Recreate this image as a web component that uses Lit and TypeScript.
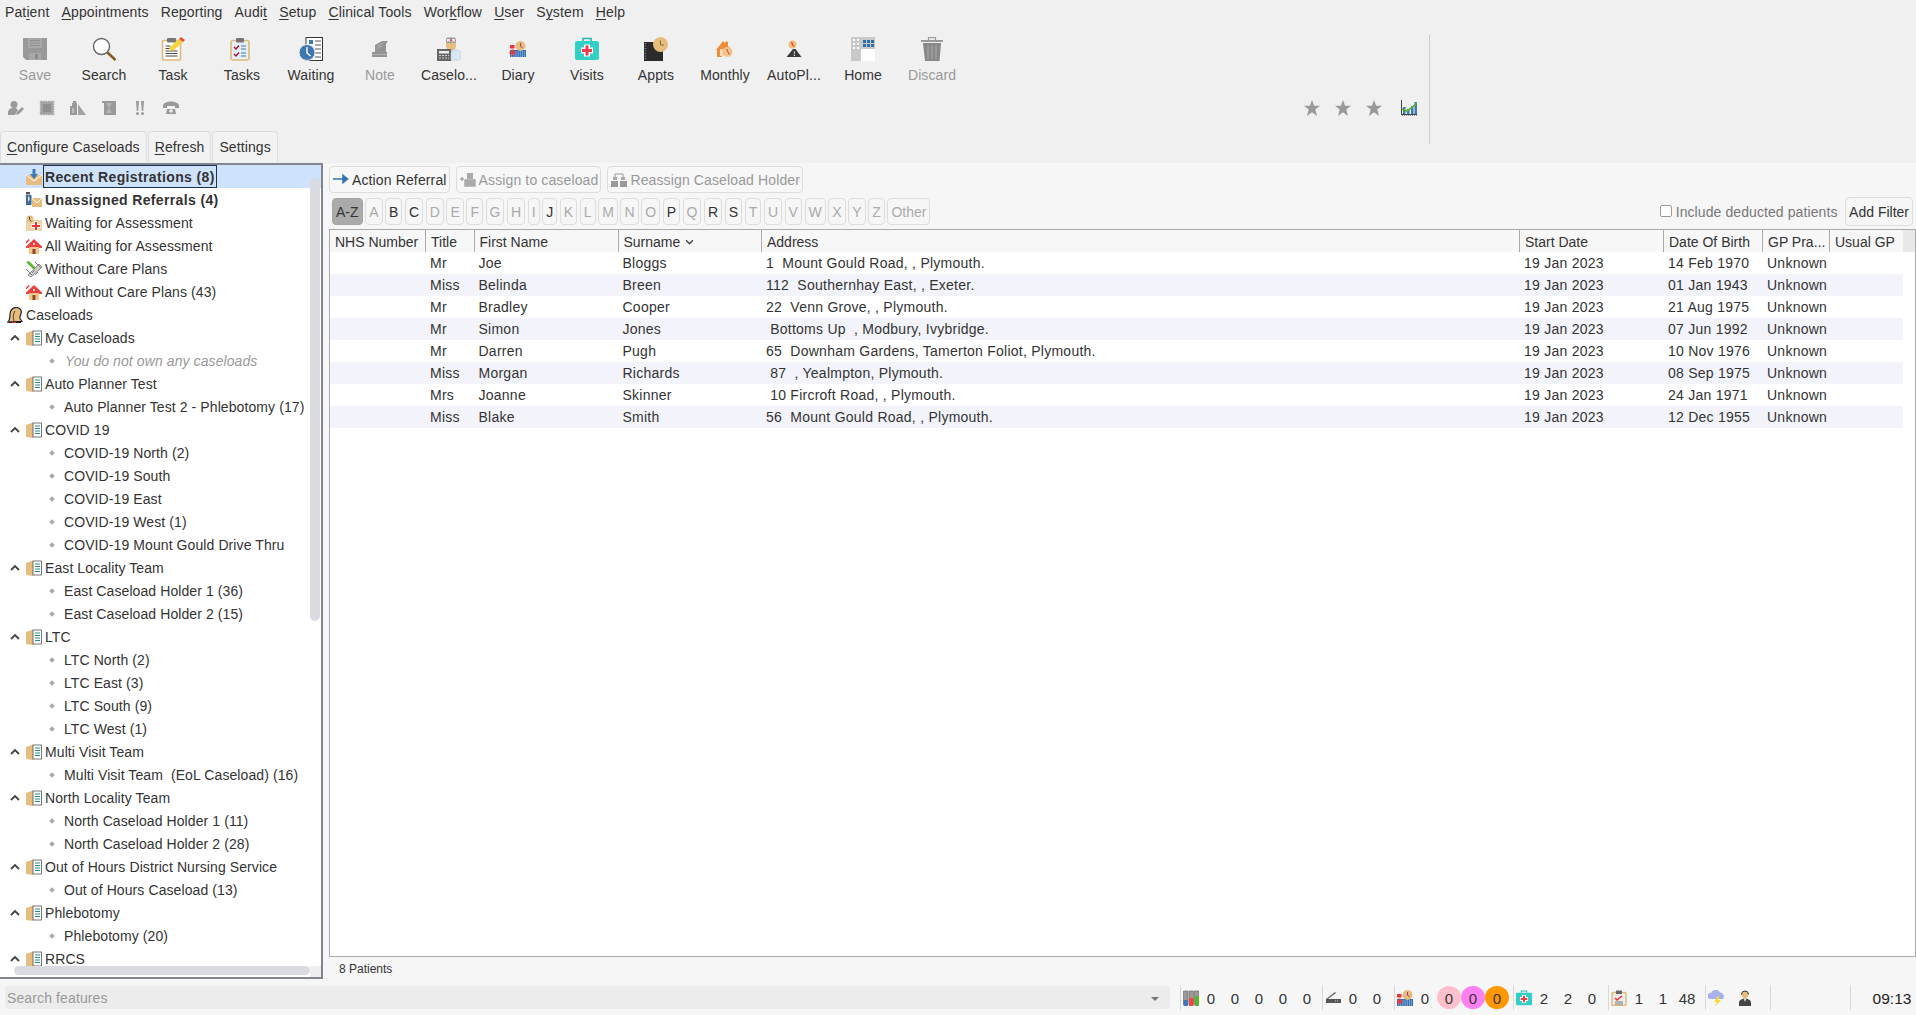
import { LitElement, html, css, svg, nothing } from "lit";
import { customElement } from "lit/decorators.js";

const icons: Record<string, any> = {
  save: svg`<path d="M0 1h24v22H3l-3-3z" fill="#999"/><rect x="5" y="1" width="14" height="10" fill="#a8a8a8"/><path d="M7 3.500h10M7 6h10M7 8.500h10" stroke="#8f8f8f" stroke-width="1"/><rect x="6" y="16" width="12" height="7" fill="#a8a8a8"/><rect x="12" y="17" width="3" height="5" fill="#8a8a8a"/>`,
  search: svg`<circle cx="9.500" cy="9.500" r="8" fill="#fff" stroke="#666" stroke-width="1.400"/><path d="M15.500 15.500l8 7.500" stroke="#8a5a1e" stroke-width="2.600"/>`,
  task: svg`<rect x="1.500" y="3.500" width="18" height="19.500" rx="1" fill="#fff" stroke="#e2b876" stroke-width="1.600"/><rect x="6" y="1" width="9" height="4.500" rx="1" fill="#777"/><path d="M4.500 9h5M4.500 11.500h4M4.500 14h12M4.500 16.500h12M4.500 19h12" stroke="#444" stroke-width="1.200"/><path d="M8 14l1-4L18 2l4 3-9 8z" fill="#f7d23a"/><path d="M18 2l2-2 4 3-2 2z" fill="#e84c3d"/>`,
  tasks: svg`<rect x="1" y="3.500" width="18" height="19.500" rx="2" fill="#e5eff9" stroke="#e2b876" stroke-width="1.600"/><rect x="6" y="1" width="8" height="4.500" rx="1" fill="#777"/><path d="M4 10l2 2 3-3.500M4 17l2 2 3-3.500" fill="none" stroke="#a3153d" stroke-width="1.500"/><path d="M11 9h5M11 12h5M11 16h5M11 19h5" stroke="#3d7ab5" stroke-width="1.200"/>`,
  waiting: svg`<rect x="7" y="0.500" width="16.500" height="23" fill="#fff" stroke="#333"/><rect x="10" y="3" width="4" height="4" fill="#3d7ab5"/><path d="M16 4h6M16 8h6M16 12h6M16 16h6M16 20h6" stroke="#555"/><circle cx="8" cy="15.500" r="8" fill="#3f77b2" stroke="#eee"/><path d="M8 10v6l3.500 3" fill="none" stroke="#fff" stroke-width="1.400"/>`,
  note: svg`<path d="M7 15V8l7-4h6l-2 3v8z" fill="#949494"/><path d="M9 9l6-3M9 11.500l6-3" stroke="#b5b5b5" stroke-width=".8"/><rect x="4" y="15" width="15" height="5" fill="#949494"/><path d="M4 17.500h15" stroke="#bbb" stroke-width=".7"/>`,
  caseload: svg`<path d="M9 5h10v4a5 5 0 0 1-10 0z" fill="#e6bd7f"/><rect x="9" y="0.500" width="10" height="5.500" rx="2" fill="#999"/><rect x="10" y="2" width="8" height="2.500" fill="#eee"/><circle cx="14" cy="3.200" r="1.100" fill="#e33"/><rect x="0" y="12" width="14" height="12" fill="#666"/><rect x="2" y="14" width="10" height="2.500" fill="#eee"/><path d="M2 18.500h10M2 21h10" stroke="#ccc" stroke-dasharray="2 1"/><path d="M14 23v-6a4 4 0 0 1 3-4l3 0a5 5 0 0 1 4 5v3l-2 2z" fill="#d6e8f6" stroke="#b9c8d4" stroke-width=".6"/>`,
  diary: svg`<rect x="4" y="13" width="16" height="7" fill="#2e6fb5"/><path d="M5 15h14M5 17h14M5 19h14" stroke="#fff" stroke-dasharray="1 1.200" stroke-width=".8"/><circle cx="14.500" cy="9" r="5" fill="#e6bd7f"/><path d="M14.500 6v3l2 2" stroke="#a36" fill="none"/><rect x="4" y="8" width="4.500" height="3.500" fill="#e33"/><path d="M6.500 12.500v6M3.500 15.500h6" stroke="#e33" stroke-width="2"/>`,
  visits: svg`<path d="M8 4V1.500h8V4" fill="none" stroke="#27b8ad" stroke-width="1.600"/><rect x="0" y="4" width="24" height="19" rx="2" fill="#32cfc5"/><path d="M12 7.500v12M6 13.500h12" stroke="#fff" stroke-width="6"/><path d="M12 8.500v10M7 13.500h10" stroke="#ec3b4c" stroke-width="3"/>`,
  appts: svg`<rect x="0" y="5" width="19" height="19" fill="#2b2b2b"/><path d="M1.500 6v17" stroke="#888" stroke-dasharray="1 1.500" stroke-width="1.400"/><circle cx="16.500" cy="7.500" r="7.500" fill="#e6bd7f"/><path d="M16.500 3.500v4.500h3.500" fill="none" stroke="#8a6a30" stroke-width="1"/>`,
  monthly: svg`<path d="M4 20v-7H3l7-9 2 2 1-2 2 1v4l3 3v2H9v6z" fill="#ee8c3a"/><path d="M7 12h5v7H7z" fill="#f6d9bb"/><circle cx="14.500" cy="15" r="5" fill="#f0c58a"/><path d="M13.500 12l1.500 3 1.500 2.500" fill="none" stroke="#d33" stroke-width="1"/>`,
  autopl: svg`<circle cx="10.500" cy="7.500" r="4" fill="#efc078"/><path d="M9.500 5l1 2.500 1.500 2" fill="none" stroke="#d33" stroke-width="1.200"/><path d="M11 12h2.500l6 8h-15z" fill="#3a3a3a"/><path d="M12.300 14.500v2M12.300 17.500v1.500" stroke="#fff"/>`,
  home: svg`<rect width="24" height="24" fill="#c9c9c9"/><rect x="10" y="12" width="14" height="12" fill="#fff"/><g fill="#fff"><rect x="2" y="2" width="2" height="2"/><rect x="6" y="2" width="2" height="2"/><rect x="2" y="6" width="2" height="2"/><rect x="6" y="6" width="2" height="2"/><rect x="2" y="10" width="2" height="2"/><rect x="6" y="10" width="2" height="2"/></g><g fill="#2f6da8"><rect x="12" y="3" width="3" height="3"/><rect x="16" y="3" width="3" height="3"/><rect x="20" y="3" width="3" height="3"/><rect x="12" y="7" width="3" height="3"/><rect x="16" y="7" width="3" height="3"/><rect x="20" y="7" width="3" height="3"/></g>`,
  discard: svg`<rect x="8.500" y="0.500" width="7" height="3" fill="none" stroke="#999" stroke-width="1.200"/><rect x="1" y="3" width="22" height="2" fill="#999"/><path d="M3 6h18l-1.500 18H5z" fill="#888"/><path d="M8 8v14M12 8v14M16 8v14" stroke="#a8a8a8" stroke-width="1.200"/>`,

  sPerson: svg`<circle cx="6" cy="4.500" r="3.500" fill="#999"/><path d="M0 15v-3a5 5 0 0 1 5-4h3l2 2-3 5z" fill="#999"/><path d="M8 15l1-3 5-5 2 2-5 5z" fill="#999"/>`,
  sStamp: svg`<rect x="1.500" y="1.500" width="13" height="13" fill="#a3a3a3" stroke="#a3a3a3" stroke-width="1.500" stroke-dasharray="1.500 1"/><rect x="4" y="4" width="8" height="8" fill="#8f8f8f"/>`,
  sBuild: svg`<path d="M0 15V6h2V3h1V1h3l1 3v11z" fill="#999"/><path d="M8 15V4l8 11z" fill="#a3a3a3"/><path d="M3 8v5" stroke="#ddd"/>`,
  sScroll: svg`<path d="M1 1h14v14H3V3H1z" fill="#999"/><path d="M5 3h6l-3 5 3 5H5l3-5z" fill="#b5b5b5"/>`,
  sBang: svg`<path d="M4 1h3l-.8 10H4.800zM9 1h3l-.8 10H9.800z" fill="#999"/><circle cx="5.500" cy="13.500" r="1.500" fill="#999"/><circle cx="10.500" cy="13.500" r="1.500" fill="#999"/>`,
  sPhone: svg`<path d="M0 6c0-6 16-6 16 0v2h-4V6H4v2H0z" fill="#999"/><path d="M3 14l1-5h8l1 5z" fill="#999"/><circle cx="8" cy="11" r="1.800" fill="#eee"/>`,
  star: svg`<path d="M8 0l2.100 5.800H16l-4.700 3.600L13 16 8 12.200 3 16l1.700-6.600L0 5.800h5.900z" fill="#999"/>`,
  chart: svg`<path d="M.5 0v15M0 14.500h16" stroke="#444"/><path d="M1 15h15" stroke="#444" stroke-dasharray="1 1"/><rect x="2" y="7" width="2.500" height="7" fill="#3d7ab5"/><rect x="6" y="9" width="2.500" height="5" fill="#3d7ab5"/><rect x="10" y="6" width="2.500" height="8" fill="#3d7ab5"/><rect x="13.500" y="2" width="2.500" height="12" fill="#3d7ab5"/><path d="M1 9l5 2 4-3 6-5" fill="none" stroke="#5cb531" stroke-width="1.600"/>`,

  envDown: svg`<path d="M0 6h16v10H0z" fill="#e6bd7f"/><path d="M0 6l8 6 8-6" fill="none" stroke="#fff" stroke-width="1"/><path d="M6.500 0h3v5H12L8 10 4 5h2.500z" fill="#3d7ab5"/>`,
  envMan: svg`<rect x="0" y="0" width="4" height="2.500" fill="#555"/><rect x="0" y="3" width="5.500" height="10" fill="#3d6c99"/><path d="M2.800 3l-.8 4 .8 3 .8-3z" fill="#fff"/><path d="M6 6h10v9H6z" fill="#e6bd7f"/><path d="M6 6l5 5 5-5" fill="none" stroke="#fff"/>`,
  envCross: svg`<path d="M0 5h16v11H0z" fill="#f0d3a4"/><circle cx="4" cy="4" r="3.500" fill="#e6bd7f"/><path d="M3.500 1.500v3l2 2" stroke="#555" fill="none"/><path d="M10 6.500v9M5.500 11h9" stroke="#fff" stroke-width="4"/><path d="M10 7v8M6 11h8" stroke="#e33" stroke-width="2"/>`,
  houseRed: svg`<path d="M0 8.500L8 1l8 7.500v1.500H0z" fill="#ea4040"/><path d="M0 5l3-3.500" stroke="#ea4040" stroke-width="1.500"/><rect x="3" y="9" width="10" height="7" fill="#f4c58b"/><rect x="6.500" y="11" width="3" height="5" fill="#8a4a2a"/><circle cx="8" cy="6" r="1" fill="#fff"/>`,
  tools: svg`<path d="M0 1l3-1 8 8-2 2z" fill="#5cb531"/><path d="M2 14L13 3l3 3L5 16z" fill="#ccc" stroke="#777" stroke-width=".8"/><path d="M0 8l7 7M9 1l6 6M6 12l3-3M9 14l3-3" stroke="#888"/>`,
  cases: svg`<path d="M1 15c2-2 2-5 2-8 0-4 3-6.500 6.500-6.500s5.500 3 4.500 6c-.5 2-1.500 3-1 5l2 3H9z" fill="#e6bd7f" stroke="#222" stroke-width="1.200"/><path d="M8 4c-2 3-2 6-1 10" fill="none" stroke="#222" stroke-width=".8"/><path d="M2 15.500h12" stroke="#222" stroke-width="1.400"/><path d="M5 15.500h4" stroke="#d33" stroke-width="1.400"/>`,
  book: svg`<path d="M0 3l7-2.500v15.500l-7-1z" fill="#e6bd7f"/><rect x="7" y="1" width="8.500" height="14" fill="#fff" stroke="#555" stroke-width=".8"/><path d="M9 4h5M9 6.500h5M9 9h5M9 11.500h5" stroke="#1f8f88" stroke-width="1.100"/>`,

  tubes: svg`<path d="M.5 1h4.500v13a2.200 2.200 0 0 1-4.500 0z" fill="#999" stroke="#666" stroke-width=".6"/><path d="M.5 10h4.500v4a2.200 2.200 0 0 1-4.500 0z" fill="#3d7ab5"/><path d="M6 1h4.500v13a2.200 2.200 0 0 1-4.500 0z" fill="#999" stroke="#666" stroke-width=".6"/><path d="M6 8h4.500v6a2.200 2.200 0 0 1-4.500 0z" fill="#e44"/><path d="M11.500 1h4.500v13a2.200 2.200 0 0 1-4.500 0z" fill="#999" stroke="#666" stroke-width=".6"/><path d="M11.500 6h4.500v8a2.200 2.200 0 0 1-4.500 0z" fill="#5cb531"/>`,
  scanner: svg`<path d="M1 9L10 2l1 1-8 6z" fill="#666"/><path d="M1 9h15v4H1z" fill="#555"/><path d="M10 11h4" stroke="#ccc" stroke-dasharray="1 1"/>`,
  clip: svg`<rect x="1" y="2.500" width="14" height="13" rx="1" fill="#eee" stroke="#e2b876" stroke-width="1.400"/><rect x="5" y="0.500" width="6" height="3.500" fill="#666"/><path d="M4 8l2 2 5-4" fill="none" stroke="#e33" stroke-width="1.500"/><path d="M4 12h8M4 14h8" stroke="#777"/>`,
  storm: svg`<path d="M2 9a3 3 0 0 1 1-6 5 5 0 0 1 9-.5A4 4 0 0 1 15 9z" fill="#aab0ee"/><path d="M10 6l-4 6h3l-2 5 6-7h-3l2-4z" fill="#f3d93a"/>`,
  agent: svg`<path d="M2 16v-3c0-3 3-4.500 6-4.500s6 1.500 6 4.500v3z" fill="#444"/><path d="M6.500 8.500L8 12l1.500-3.500z" fill="#ddd"/><circle cx="8" cy="4.500" r="3.500" fill="#e6bd7f"/><path d="M4.500 4.500a3.500 3.500 0 0 1 7 0" fill="none" stroke="#333"/>`,
  arrow: svg`<path d="M0 7h13M10 3.500L14.500 7 10 10.500z" stroke="#2f74b5" stroke-width="1.600" fill="#2f74b5"/>`,
  assign: svg`<rect x="7" y="1" width="6" height="6" fill="#aaa"/><path d="M5 14V8h10v6zM0 7h4M2 5v4" stroke="#aaa" stroke-width="1.500" fill="#aaa"/>`,
  reassign: svg`<rect x="2" y="5" width="4" height="3" fill="#aaa"/><rect x="10" y="5" width="4" height="3" fill="#aaa"/><path d="M0 15V9h7v6zM9 15V9h7v6z" fill="#999"/><path d="M4 5V2h8v3" fill="none" stroke="#999"/>`,
};

const ic = (name: string, cls: string, vb = "0 0 24 24") =>
  html`<svg class=${cls} viewBox=${vb} aria-hidden="true">${icons[name]}</svg>`;
const S16 = "0 0 16 16";

const menu: [string, number][] = [
  ["Patient", 3], ["Appointments", 0], ["Reporting", 2], ["Audit", 4], ["Setup", 0],
  ["Clinical Tools", 0], ["Workflow", 3], ["User", 0], ["System", 1], ["Help", 0],
];

const tools: [string, string, boolean][] = [
  ["Save", "save", true], ["Search", "search", false], ["Task", "task", false], ["Tasks", "tasks", false],
  ["Waiting", "waiting", false], ["Note", "note", true], ["Caselo...", "caseload", false], ["Diary", "diary", false],
  ["Visits", "visits", false], ["Appts", "appts", false], ["Monthly", "monthly", false], ["AutoPl...", "autopl", false],
  ["Home", "home", false], ["Discard", "discard", true],
];

type Row = { k: "top" | "root" | "group" | "leaf"; t: string; i?: string; b?: boolean; sel?: boolean; em?: boolean };
const group = (t: string): Row => ({ k: "group", t, i: "book" });
const leaf = (t: string): Row => ({ k: "leaf", t });
const tree: Row[] = [
  { k: "top", t: "Recent Registrations (8)", i: "envDown", b: true, sel: true },
  { k: "top", t: "Unassigned Referrals (4)", i: "envMan", b: true },
  { k: "top", t: "Waiting for Assessment", i: "envCross" },
  { k: "top", t: "All Waiting for Assessment", i: "houseRed" },
  { k: "top", t: "Without Care Plans", i: "tools" },
  { k: "top", t: "All Without Care Plans (43)", i: "houseRed" },
  { k: "root", t: "Caseloads", i: "cases" },
  group("My Caseloads"),
  { k: "leaf", t: "You do not own any caseloads", em: true },
  group("Auto Planner Test"), leaf("Auto Planner Test 2 - Phlebotomy (17)"),
  group("COVID 19"), leaf("COVID-19 North (2)"), leaf("COVID-19 South"), leaf("COVID-19 East"), leaf("COVID-19 West (1)"), leaf("COVID-19 Mount Gould Drive Thru"),
  group("East Locality Team"), leaf("East Caseload Holder 1 (36)"), leaf("East Caseload Holder 2 (15)"),
  group("LTC"), leaf("LTC North (2)"), leaf("LTC East (3)"), leaf("LTC South (9)"), leaf("LTC West (1)"),
  group("Multi Visit Team"), leaf("Multi Visit Team  (EoL Caseload) (16)"),
  group("North Locality Team"), leaf("North Caseload Holder 1 (11)"), leaf("North Caseload Holder 2 (28)"),
  group("Out of Hours District Nursing Service"), leaf("Out of Hours Caseload (13)"),
  group("Phlebotomy"), leaf("Phlebotomy (20)"),
  group("RRCS"),
];

const letters = ["A-Z", ..."ABCDEFGHIJKLMNOPQRSTUVWXYZ".split(""), "Other"];
const active = new Set(["A-Z", "B", "C", "J", "P", "R", "S"]);

const head = ["NHS Number", "Title", "First Name", "Surname", "Address", "Start Date", "Date Of Birth", "GP Pra...", "Usual GP"];
const patients = [
  ["Mr", "Joe", "Bloggs", "1  Mount Gould Road, , Plymouth.", "14 Feb 1970"],
  ["Miss", "Belinda", "Breen", "112  Southernhay East, , Exeter.", "01 Jan 1943"],
  ["Mr", "Bradley", "Cooper", "22  Venn Grove, , Plymouth.", "21 Aug 1975"],
  ["Mr", "Simon", "Jones", " Bottoms Up  , Modbury, Ivybridge.", "07 Jun 1992"],
  ["Mr", "Darren", "Pugh", "65  Downham Gardens, Tamerton Foliot, Plymouth.", "10 Nov 1976"],
  ["Miss", "Morgan", "Richards", " 87  , Yealmpton, Plymouth.", "08 Sep 1975"],
  ["Mrs", "Joanne", "Skinner", " 10 Fircroft Road, , Plymouth.", "24 Jan 1971"],
  ["Miss", "Blake", "Smith", "56  Mount Gould Road, , Plymouth.", "12 Dec 1955"],
];

const status: { w: number; icon?: string; vb?: string; nums?: (string | [string, string])[]; extra?: string }[] = [
  { w: 142, icon: "tubes", vb: S16, nums: ["0", "0", "0", "0", "0"] },
  { w: 72, icon: "scanner", vb: S16, nums: ["0", "0"] },
  { w: 119, icon: "diary", vb: "4 4 16 16", nums: ["0", ["0", "pink"], ["0", "magenta"], ["0", "orange"]] },
  { w: 95, icon: "visits", nums: ["2", "2", "0"] },
  { w: 97, icon: "clip", vb: S16, nums: ["1", "1", "48"] },
  { w: 65, icon: "storm", vb: S16, extra: "agent" },
  { w: 80 },
];

@customElement("app-root")
export class AppRoot extends LitElement {
  static styles = css`
    :host {
      display: flex;
      flex-direction: column;
      width: 1916px;
      height: 1015px;
      overflow: hidden;
      background: #f6f6f6;
      color: #333;
      font: 14px/1.2 "Liberation Sans", Arial, sans-serif;
    }
    svg { display: block; flex: none; }
    u { text-decoration-thickness: 1px; text-underline-offset: 2px; }

    .top { background: #f0f0f0; height: 163px; flex: none; }
    .menu { display: flex; gap: 12.1px; height: 25px; align-items: center; padding-left: 5px; letter-spacing: 0.12px; }
    .toolwrap { margin-top: 10px; width: 1429px; height: 96px; border-right: 1px solid #ccc; padding-bottom: 13px; }
    .tools { display: flex; height: 53px; padding-left: 0.5px; letter-spacing: 0.1px; }
    .tool { width: 69px; display: flex; flex-direction: column; align-items: center; padding-top: 2px; }
    .tool span { margin-top: 6px; line-height: 16px; }
    .tool.off span { color: #999; }
    .i24 { width: 24px; height: 24px; }
    .row2 { display: flex; align-items: center; height: 40px; padding-left: 8px; }
    .small { display: flex; gap: 15px; }
    .i16 { width: 16px; height: 16px; }
    .stars { display: flex; gap: 15px; margin-left: 1125px; }
    .stars .chart { margin-left: 4px; }
    .tabs { display: flex; gap: 1px; margin-top: -13px; letter-spacing: 0.1px; }
    .tab { height: 30px; line-height: 31px; padding: 0 6px; border: 1px solid #ddd; border-bottom: 0; border-radius: 4px 4px 0 0; background: #f2f2f2; }

    .body { display: flex; flex: none; height: 822px; }
    .tree {
      position: relative; width: 321px; height: 812px; flex: none; overflow: hidden;
      background: #fff; border: 2px solid #808590; border-left: 0; letter-spacing: 0.09px;
    }
    .row { display: flex; align-items: center; height: 23px; white-space: pre; }
    .row > span { padding-top: 2px; }
    .row.top-r { padding-left: 26px; }
    .row.root { padding-left: 7px; }
    .row.group { padding-left: 10px; }
    .row.leaf { padding-left: 50px; }
    .row.sel { background: #cfe2fb; width: 310px; }
    .row .i16 { margin-right: 3px; }
    .b { font-weight: 700; letter-spacing: 0.36px; }
    .row > span.focus { border: 1px solid #1c3250; line-height: 19px; padding: 2px 1px 0; margin-left: -2px; }
    .chev { width: 10px; height: 7px; margin-right: 6px; }
    .row > span.dot { width: 4px; height: 4px; padding: 0; background: #aaa; margin-right: 10px; transform: rotate(45deg); }
    .em { font-style: italic; color: #999; margin-left: 1px; }
    .vbar { position: absolute; right: 1px; top: 13px; width: 10px; height: 443px; background: #d9dbe0; border-radius: 5px; }
    .hbar { position: absolute; left: 14px; bottom: 2px; width: 296px; height: 9px; background: #d9dbe0; border-radius: 5px; }
    .corner { position: absolute; right: 0; bottom: 0; width: 11px; height: 11px; background: #eee; }

    .main { flex: 1; min-width: 0; margin-left: 6px; padding-top: 3px; display: flex; flex-direction: column; }
    .actions { display: flex; gap: 6px; height: 27px; letter-spacing: 0.13px; }
    .btn { display: flex; align-items: center; gap: 3px; border: 1px solid #ddd; border-radius: 4px; padding: 2px 2px 0 3px; background: #f7f7f7; white-space: nowrap; box-sizing: border-box; }
    .btn svg { margin-top: -2px; }
    .btn.off { color: #999; }
    .filter { display: flex; align-items: center; height: 27px; margin-top: 5px; padding-left: 3px; padding-right: 3px; gap: 2.6px; }
    .ltr { height: 25px; line-height: 27px; padding: 0 3px; border: 1px solid #ddd; border-radius: 4px; color: #aaa; }
    .ltr.on { color: #333; }
    .ltr.all { background: #aaa; border-color: #a5a5a5; color: #333; }
    .check { display: flex; align-items: center; gap: 4px; margin-left: auto; color: #777; margin-right: 5px; padding-top: 1px; letter-spacing: 0.09px; }
    .box { width: 10px; height: 10px; border: 1.5px solid #999; border-radius: 2px; background: #fff; margin-top: -1px; }
    .add { height: 27px; line-height: 28px; padding: 0 3px; border: 1px solid #ddd; border-radius: 4px; color: #333; }

    .table { flex: none; height: 726px; margin-top: 4px; border: 1px solid #aaa; background: #fff; }
    .head { display: flex; height: 22px; }
    .hrow, .drow { display: grid; grid-template-columns: 95px 48.5px 144px 143.5px 758px 144px 99px 67px 74px; width: 1573px; height: 22px; line-height: 22px; white-space: pre; }
    .hrow { background: #f7f7f7; }
    .hcell { padding: 2px 0 0 5px; border-left: 1px solid #aaa; display: flex; align-items: center; gap: 5px; overflow: hidden; }
    .hcell:first-child { border-left: 0; }
    .hfill { background: #e8e8e8; width: 12px; }
    .drow { letter-spacing: 0.25px; }
    .drow.alt { background: #f3f4fb; }
    .cell { padding-left: 5px; overflow: hidden; }
    .sort { width: 9px; height: 6px; }
    .foot { font-size: 12px; padding-left: 10px; margin-top: 5px; line-height: 14px; }

    .status { flex: none; display: flex; align-items: center; height: 25px; }
    .searchbox { width: 1165px; height: 23px; margin-left: 5px; margin-right: 10px; padding: 2px 11px 0 2px; background: #ececec; border-radius: 3px; display: flex; align-items: center; justify-content: space-between; box-sizing: border-box; color: #999; letter-spacing: 0.12px; }
    .caret { width: 0; height: 0; border-left: 4px solid transparent; border-right: 4px solid transparent; border-top: 4px solid #777; }
    .grp { height: 25px; border-left: 1px solid #d8d8d8; display: flex; align-items: center; padding-left: 2px; box-sizing: border-box; font-size: 15px; flex: none; }
    .num { width: 24px; text-align: center; height: 23px; line-height: 25px; flex: none; }
    .num.pink, .num.magenta, .num.orange { border-radius: 50%; }
    .num.pink { background: #ffc0cb; }
    .num.magenta { background: #ff80f0; }
    .num.orange { background: #ff9800; }
    .gap13 { width: 13px; flex: none; }
    .time { width: 66px; font-size: 15.5px; text-align: center; border-left: 1px solid #d8d8d8; height: 25px; line-height: 27px; padding-left: 17px; box-sizing: border-box; color: #222; }
  `;

  private row(r: Row) {
    const cls = { top: "top-r", root: "root", group: "group", leaf: "leaf" }[r.k];
    return html`<div class="row ${cls} ${r.sel ? "sel" : ""}">
      ${r.k === "group"
        ? html`<svg class="chev" viewBox="0 0 10 7"><path d="M1 6l4-4 4 4" fill="none" stroke="#444" stroke-width="1.800"/></svg>`
        : nothing}
      ${r.k === "leaf" ? html`<span class="dot"></span>` : nothing}
      ${r.i ? ic(r.i, "i16", S16) : nothing}
      ${r.sel
        ? html`<span class="focus b">${r.t}</span>`
        : html`<span class="${r.b ? "b" : ""} ${r.em ? "em" : ""}">${r.t}</span>`}
    </div>`;
  }

  render() {
    return html`
      <div class="top">
        <div class="menu">
          ${menu.map(([t, i]) => html`<span>${t.slice(0, i)}<u>${t[i]}</u>${t.slice(i + 1)}</span>`)}
        </div>
        <div class="toolwrap">
          <div class="tools">
            ${tools.map(([t, i, off]) => html`<div class="tool ${off ? "off" : ""}">${ic(i, "i24")}<span>${t}</span></div>`)}
          </div>
          <div class="row2">
            <div class="small">
              ${["sPerson", "sStamp", "sBuild", "sScroll", "sBang", "sPhone"].map((n) => ic(n, "i16", S16))}
            </div>
            <div class="stars">
              ${ic("star", "i16", S16)}${ic("star", "i16", S16)}${ic("star", "i16", S16)}
              <span class="chart">${ic("chart", "i16", S16)}</span>
            </div>
          </div>
        </div>
        <div class="tabs">
          <div class="tab"><u>C</u>onfigure Caseloads</div>
          <div class="tab"><u>R</u>efresh</div>
          <div class="tab">Settings</div>
        </div>
      </div>

      <div class="body">
        <div class="tree">
          ${tree.map((r) => this.row(r))}
          <div class="vbar"></div>
          <div class="hbar"></div>
          <div class="corner"></div>
        </div>
        <div class="main">
          <div class="actions">
            <div class="btn">${ic("arrow", "i16", S16)}<span>Action Referral</span></div>
            <div class="btn off">${ic("assign", "i16", S16)}<span>Assign to caseload</span></div>
            <div class="btn off">${ic("reassign", "i16", S16)}<span>Reassign Caseload Holder</span></div>
          </div>
          <div class="filter">
            ${letters.map((l) => html`<div class="ltr ${active.has(l) ? "on" : ""} ${l === "A-Z" ? "all" : ""}">${l}</div>`)}
            <label class="check"><span class="box"></span>Include deducted patients</label>
            <div class="add">Add Filter</div>
          </div>
          <div class="table">
            <div class="head">
              <div class="hrow">
                ${head.map((h) => html`<div class="hcell">${h}${h === "Surname"
                  ? html`<svg class="sort" viewBox="0 0 8 5"><path d="M1 1l3 3 3-3" fill="none" stroke="#444" stroke-width="1.200"/></svg>`
                  : nothing}</div>`)}
              </div>
              <div class="hfill"></div>
            </div>
            ${patients.map((p, i) => html`<div class="drow ${i % 2 ? "alt" : ""}">
              <div class="cell"></div>
              <div class="cell">${p[0]}</div>
              <div class="cell">${p[1]}</div>
              <div class="cell">${p[2]}</div>
              <div class="cell">${p[3]}</div>
              <div class="cell">19 Jan 2023</div>
              <div class="cell">${p[4]}</div>
              <div class="cell">Unknown</div>
              <div class="cell"></div>
            </div>`)}
          </div>
          <div class="foot">8 Patients</div>
        </div>
      </div>

      <div class="status">
        <div class="searchbox"><span>Search features</span><span class="caret"></span></div>
        ${status.map((s) => html`<div class="grp" style="width:${s.w}px">
          ${s.icon ? ic(s.icon, "i16", s.vb) : nothing}
          ${(s.nums ?? []).map((n) => Array.isArray(n)
            ? html`<span class="num ${n[1]}">${n[0]}</span>`
            : html`<span class="num">${n}</span>`)}
          ${s.extra ? html`<span class="gap13"></span>${ic(s.extra, "i16", S16)}` : nothing}
        </div>`)}
        <div class="time">09:13</div>
      </div>
    `;
  }
}
